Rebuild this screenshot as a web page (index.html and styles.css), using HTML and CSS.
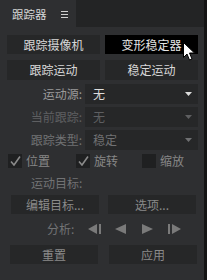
FILE: index.html
```html
<!DOCTYPE html>
<html>
<head>
<meta charset="utf-8">
<link rel="stylesheet" href="styles.css">
</head>
<body>
<div class="win">
  <div class="panel">
    <div class="tabbar">
      <div class="tab">
        <span class="tab-title">跟踪器</span>
        <svg class="menu" width="7" height="7" viewBox="0 0 7 7"><rect x="0" y="0" width="7" height="1" fill="#cfcfcf"/><rect x="0" y="3" width="7" height="1" fill="#cfcfcf"/><rect x="0" y="6" width="7" height="1" fill="#cfcfcf"/></svg>
      </div>
    </div>
    <div class="content">
      <div class="btnrow r1">
        <div class="btn">跟踪摄像机</div>
        <div class="btn active">变形稳定器</div>
      </div>
      <div class="btnrow r2">
        <div class="btn">跟踪运动</div>
        <div class="btn">稳定运动</div>
      </div>
      <div class="field f1">
        <div class="label">运动源:</div>
        <div class="dd"><span>无</span><svg width="7" height="4" viewBox="0 0 7 4"><path d="M0 0H7L3.5 4Z" fill="#dcdcdc"/></svg></div>
      </div>
      <div class="field f2 dis">
        <div class="label">当前跟踪:</div>
        <div class="dd"><span>无</span><svg width="7" height="4" viewBox="0 0 7 4"><path d="M0 0H7L3.5 4Z" fill="#5e5f61"/></svg></div>
      </div>
      <div class="field f3 semi">
        <div class="label">跟踪类型:</div>
        <div class="dd"><span>稳定</span><svg width="7" height="4" viewBox="0 0 7 4"><path d="M0 0H7L3.5 4Z" fill="#6f7072"/></svg></div>
      </div>
      <div class="checks">
        <div class="chk"><div class="box"><svg width="11" height="10" viewBox="0 0 11 10"><path d="M1 5.5L4 9L10 0.5" stroke="#8a8a8a" stroke-width="1.6" fill="none"/></svg></div><span>位置</span></div>
        <div class="chk"><div class="box"><svg width="11" height="10" viewBox="0 0 11 10"><path d="M1 5.5L4 9L10 0.5" stroke="#8a8a8a" stroke-width="1.6" fill="none"/></svg></div><span>旋转</span></div>
        <div class="chk"><div class="box"></div><span>缩放</span></div>
      </div>
      <div class="target">运动目标:</div>
      <div class="btnrow r3">
        <div class="btn grey">编辑目标...</div>
        <div class="btn grey">选项...</div>
      </div>
      <div class="analyze">
        <span class="alabel">分析:</span>
        <svg class="ic i1" width="14" height="10" viewBox="0 0 14 10"><path d="M0 5L9 0V10Z" fill="#7a7a7a"/><rect x="11" y="0" width="2" height="10" fill="#7a7a7a"/></svg>
        <svg class="ic i2" width="11" height="10" viewBox="0 0 11 10"><path d="M0 5L11 0V10Z" fill="#7a7a7a"/></svg>
        <svg class="ic i3" width="11" height="10" viewBox="0 0 11 10"><path d="M11 5L0 0V10Z" fill="#7a7a7a"/></svg>
        <svg class="ic i4" width="13" height="10" viewBox="0 0 13 10"><rect x="0" y="0" width="2" height="10" fill="#7a7a7a"/><path d="M13 5L4 0V10Z" fill="#7a7a7a"/></svg>
      </div>
      <div class="btnrow r4">
        <div class="btn grey">重置</div>
        <div class="btn grey">应用</div>
      </div>
    </div>
  </div>
  <div class="edge"></div>
  <svg class="cursor" width="13" height="19" viewBox="0 0 13 19"><path d="M0.5 0.5V15.5L4 12L6.5 18L9 17L6.5 11H11.5Z" fill="#ffffff" stroke="#000" stroke-width="1"/></svg>
</div>
</body>
</html>
```
FILE: styles.css
```css
* { box-sizing: border-box; }
html, body { margin: 0; padding: 0; }
body {
  width: 207px;
  height: 280px;
  overflow: hidden;
  background: #2e2f31;
  font-family: "Noto Sans CJK SC", "Noto Sans", sans-serif;
  font-size: 12px;
}
.win {
  position: relative;
  display: flex;
  width: 207px;
  height: 280px;
}
.panel {
  width: 204px;
  height: 280px;
  background: #2e2f31;
  display: flex;
  flex-direction: column;
}
.edge {
  width: 3px;
  height: 280px;
  background: #141414;
}
.tabbar {
  height: 27px;
  background: #232425;
  display: flex;
}
.tab {
  width: 76px;
  height: 27px;
  background: #2e2f31;
  display: flex;
  align-items: center;
  padding-left: 12px;
}
.tab-title {
  color: #d6d6d6;
  line-height: 14px;
  font-size: 11.5px;
}
.menu { margin-left: 14px; margin-top: 1px; }
.content {
  display: flex;
  flex-direction: column;
}
.btnrow {
  display: flex;
  height: 19px;
}
.btn {
  background: #262728;
  color: #d8d8d8;
  display: flex;
  align-items: center;
  justify-content: center;
  line-height: 14px;
}
.btn.active { background: #000; color: #e6e6e6; }
.btn.grey { color: #8a8a8a; }
.r1 { margin-top: 8px; padding-left: 7px; gap: 5px; }
.r1 .btn, .r2 .btn { width: 93px; }
.r2 { margin-top: 6px; height: 20px; padding-left: 7px; gap: 5px; }
.field {
  display: flex;
  height: 20px;
  margin-top: 3px;
}
.f1 { margin-top: 4px; }
.label {
  width: 85px;
  padding-right: 3px;
  text-align: right;
  line-height: 20px;
  color: #9a9a9a;
}
.dd {
  width: 113px;
  background: #262728;
  display: flex;
  align-items: center;
  justify-content: space-between;
  padding-left: 8px;
  padding-right: 6px;
  color: #dcdcdc;
  line-height: 14px;
}
.dis .label, .dis .dd { color: #5e5f61; }
.semi .label, .semi .dd { color: #707173; }
.checks {
  margin-top: 4px;
  height: 14px;
  display: grid;
  grid-template-columns: 68px 66px auto;
  padding-left: 8px;
}
.chk {
  display: flex;
  align-items: center;
  color: #878787;
}
.chk span { margin-left: 4px; line-height: 14px; }
.box {
  width: 14px;
  height: 14px;
  background: #1f2021;
  display: flex;
  align-items: center;
  justify-content: center;
}
.target {
  margin-top: 7px;
  height: 15px;
  line-height: 15px;
  padding-left: 31px;
  color: #727375;
}
.r3 { margin-top: 5px; padding-left: 11px; gap: 9px; }
.r3 .btn { width: 88px; }
.analyze {
  margin-top: 8px;
  height: 14px;
  display: flex;
  align-items: center;
  padding-left: 47px;
}
.alabel { color: #727375; line-height: 14px; width: 41px; }
.ic { display: block; }
.i2 { margin-left: 13px; }
.i3 { margin-left: 16px; }
.i4 { margin-left: 15px; }
.r4 { margin-top: 9px; padding-left: 10px; gap: 11px; }
.r4 .btn { width: 88px; }
.cursor {
  position: absolute;
  left: 183px;
  top: 42px;
}
```
